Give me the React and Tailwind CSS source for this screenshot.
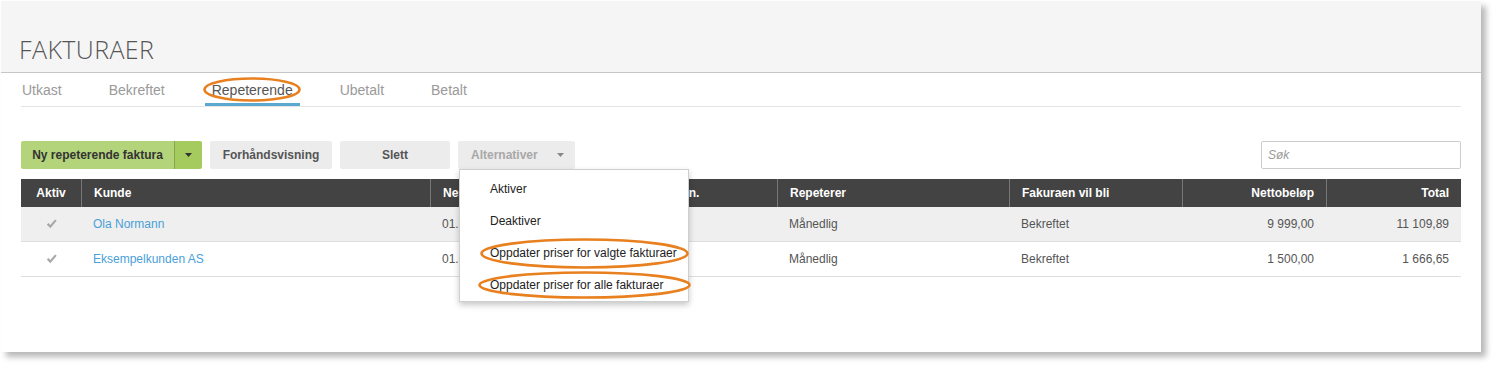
import React from "react";

const Caret = ({ color }) => (
  <svg width="7" height="4" viewBox="0 0 7 4" className="block">
    <path d="M0 0 L7 0 L3.5 4 Z" fill={color} />
  </svg>
);

const Check = () => (
  <svg width="11" height="10" viewBox="0 0 11 10" className="block">
    <path d="M0.8 5.6 L2.6 3.9 L4.2 5.9 L9.1 0.4 L10.7 1.8 L4.3 9.3 Z" fill="#a8a8a8" />
  </svg>
);

const Ellipse = ({ className, w, h }) => (
  <svg
    width={w}
    height={h}
    viewBox={`0 0 ${w} ${h}`}
    className={"absolute pointer-events-none overflow-visible " + className}
  >
    <ellipse cx={w / 2} cy={h / 2} rx={w / 2 - 1.5} ry={h / 2 - 1.5} fill="none" stroke="#e8801f" strokeWidth="2.6" />
  </svg>
);

const cols = "grid grid-cols-[60px_349px_196px_151px_232px_173px_144px_135px]";

const rows = [
  { bg: "bg-[#efefef]", kunde: "Ola Normann", netto: "9 999,00", total: "11 109,89" },
  { bg: "bg-white", kunde: "Eksempelkunden AS", netto: "1 500,00", total: "1 666,65" },
];

export default function App() {
  return (
    <div className="w-[1494px] h-[365px] bg-white pt-px pl-px" style={{ fontFamily: '"Liberation Sans", Arial, sans-serif' }}>
      <div className="w-[1480px] h-[351px] bg-white shadow-[5px_5px_6px_rgba(0,0,0,0.28)] flex flex-col">
        {/* Header */}
        <div className="h-[72px] bg-[#f5f5f5] border-b border-[#c6c6c6] flex items-end pl-[18px] pb-[9px] shrink-0">
          <h1
            className="text-[25px] leading-[28px] font-light text-[#555] tracking-[0.4px]"
            style={{ fontFamily: '"Open Sans", sans-serif' }}
          >
            FAKTURAER
          </h1>
        </div>

        {/* Tabs */}
        <div className="mx-[20px] border-b border-[#e4e4e4] shrink-0">
          <div className="flex -ml-[6px] gap-[33px]">
            {["Utkast", "Bekreftet", "Repeterende", "Ubetalt", "Betalt"].map((t) => {
              const active = t === "Repeterende";
              return (
                <div
                  key={t}
                  className={
                    "relative h-[33px] pt-[9px] px-[7px] text-[14px] leading-[16px] " +
                    (active ? "text-[#555]" : "text-[#9a9a9a]")
                  }
                >
                  {t}
                  {active && (
                    <>
                      <span className="absolute left-0 right-0 bottom-0 h-[3px] bg-[#5aa8d0]" />
                      <Ellipse className="left-[-2px] top-[4px]" w={98} h={25} />
                    </>
                  )}
                </div>
              );
            })}
          </div>
        </div>

        {/* Toolbar */}
        <div className="mx-[20px] mt-[34px] flex items-center h-[28px] shrink-0">
          <div className="flex h-[28px] rounded-[2px] overflow-hidden">
            <div className="w-[153px] bg-[#b3d47b] flex items-center justify-center text-[12px] font-bold text-[#333]">
              Ny repeterende faktura
            </div>
            <div className="w-[28px] bg-[#a5ca5e] border-l border-[#86a84a] flex items-center justify-center">
              <Caret color="#333" />
            </div>
          </div>
          <div className="ml-[8px] w-[122px] h-[28px] rounded-[2px] bg-[#ececec] flex items-center justify-center text-[12px] font-bold text-[#555]">
            Forhåndsvisning
          </div>
          <div className="ml-[8px] w-[110px] h-[28px] rounded-[2px] bg-[#ececec] flex items-center justify-center text-[12px] font-bold text-[#555]">
            Slett
          </div>
          <div className="relative ml-[8px] w-[117px] h-[28px] rounded-[2px] bg-[#ececec] flex items-center pl-[13px] text-[12px] font-bold text-[#a8a8a8]">
            Alternativer
            <span className="ml-[19px]">
              <Caret color="#888" />
            </span>
            {/* Dropdown menu */}
            <div className="absolute left-px top-full z-10 w-[230px] bg-white border border-[#cfcfcf] shadow-[0_3px_6px_rgba(0,0,0,0.22)] pt-[3px] font-normal text-[12px] text-[#222]">
              <div className="relative h-[32px] flex items-center pl-[30px]">Aktiver</div>
              <div className="relative h-[32px] flex items-center pl-[30px]">Deaktiver</div>
              <div className="relative h-[32px] flex items-center pl-[30px]">
                Oppdater priser for valgte fakturaer
                <Ellipse className="left-[20px] top-[1px]" w={209} h={31} />
              </div>
              <div className="relative h-[32px] flex items-center pl-[30px]">
                Oppdater priser for alle fakturaer
                <Ellipse className="left-[18px] top-[2px]" w={213} h={28} />
              </div>
            </div>
          </div>
          <div className="ml-auto w-[200px] h-[28px] border border-[#ccc] rounded-[2px] bg-white flex items-center pl-[6px] text-[12px] italic text-[#999]">
            Søk
          </div>
        </div>

        {/* Table */}
        <div className="mx-[20px] mt-[10px] shrink-0">
          <div className={cols + " h-[28px] bg-[#434343] text-white text-[12px] font-bold"}>
            <div className="flex items-center justify-center">Aktiv</div>
            <div className="flex items-center px-[12px] border-l border-[#777]">Kunde</div>
            <div className="flex items-center px-[12px] border-l border-[#777]">Neste faktura</div>
            <div className="flex items-center px-[12px]">Antall gen.</div>
            <div className="flex items-center px-[12px] border-l border-[#777]">Repeterer</div>
            <div className="flex items-center px-[12px] border-l border-[#777]">Fakuraen vil bli</div>
            <div className="flex items-center justify-end px-[12px] border-l border-[#777]">Nettobeløp</div>
            <div className="flex items-center justify-end px-[12px] border-l border-[#777]">Total</div>
          </div>
          {rows.map((r) => (
            <div key={r.kunde} className={cols + " h-[35px] border-b border-[#dedede] text-[12px] text-[#555] " + r.bg}>
              <div className="flex items-center justify-center">
                <Check />
              </div>
              <div className="flex items-center px-[12px] text-[#4aa0d8]">{r.kunde}</div>
              <div className="flex items-center px-[12px]">01.06.2025</div>
              <div className="flex items-center px-[12px]">3</div>
              <div className="flex items-center px-[12px]">Månedlig</div>
              <div className="flex items-center px-[12px]">Bekreftet</div>
              <div className="flex items-center justify-end px-[12px]">{r.netto}</div>
              <div className="flex items-center justify-end px-[12px]">{r.total}</div>
            </div>
          ))}
        </div>
      </div>
    </div>
  );
}
